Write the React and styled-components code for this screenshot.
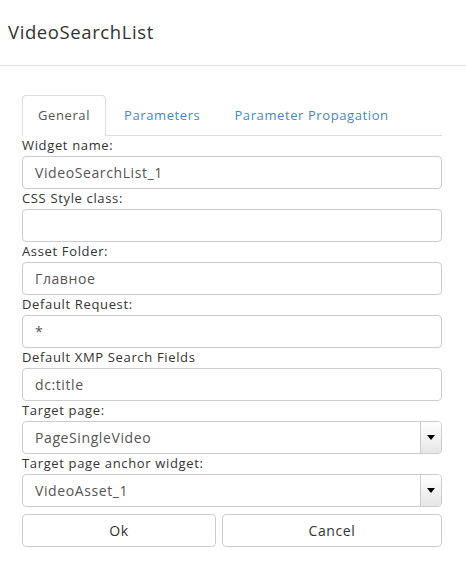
import React from 'react'
import styled, { createGlobalStyle } from 'styled-components'

const GlobalStyle = createGlobalStyle`
  body {
    margin: 0;
    background: #fff;
    font-family: "Open Sans", "Liberation Sans", sans-serif;
    letter-spacing: 0.6px;
  }
  * { box-sizing: border-box; }
`

const Dialog = styled.div`
  width: 466px;
  min-height: 570px;
  background: #fff;
`

const Header = styled.div`
  height: 66px;
  border-bottom: 1px solid #e5e5e5;
  display: flex;
  align-items: center;
  padding: 0 8px 3px;
`

const Title = styled.h4`
  margin: 0;
  font-size: 18.5px;
  font-weight: normal;
  letter-spacing: 0.6px;
  color: #333;
`

const Body = styled.div`
  padding: 29px 24px 0 22px;
`

const Tabs = styled.ul`
  display: flex;
  list-style: none;
  margin: 0;
  padding: 0;
  border-bottom: 1px solid #ddd;
`

const Tab = styled.li`
  margin: 0 2px ${p => (p.$active ? '-1px' : '0')} 0;
  padding: 10px 15px;
  height: ${p => (p.$active ? '41px' : '40px')};
  font-size: 13px;
  line-height: 19px;
  border: 1px solid ${p => (p.$active ? '#ddd' : 'transparent')};
  border-bottom: ${p => (p.$active ? '1px solid #fff' : '0')};
  border-radius: 4px 4px 0 0;
  background: ${p => (p.$active ? '#fff' : 'transparent')};
  color: ${p => (p.$active ? '#555' : '#428bca')};
`

const Label = styled.div`
  height: 20px;
  font-size: 13px;
  line-height: 19px;
  letter-spacing: 0.65px;
  color: #333;
`

const Field = styled.div`
  height: 33px;
  border: 1px solid #ccc;
  border-radius: 4px;
  display: flex;
  align-items: center;
  font-size: 14px;
  color: #555;
  overflow: hidden;
`

const FieldText = styled.span`
  flex: 1;
  padding: 0 12px;
`

const Caret = styled.div`
  width: 21px;
  height: 100%;
  border-left: 1px solid #ccc;
  background: linear-gradient(#fff, #e6e6e6);
  display: flex;
  align-items: center;
  justify-content: center;
  &::after {
    content: '';
    border-top: 5px solid #000;
    border-left: 4px solid transparent;
    border-right: 4px solid transparent;
  }
`

const Buttons = styled.div`
  display: grid;
  grid-template-columns: 194px 1fr;
  gap: 6px;
  margin-top: 7px;
`

const Button = styled.button`
  height: 33px;
  border: 1px solid #ccc;
  border-radius: 4px;
  background: #fff;
  font-family: inherit;
  font-size: 14px;
  letter-spacing: 0.6px;
  color: #333;
`

const fields = [
  { label: 'Widget name:', value: 'VideoSearchList_1' },
  { label: 'CSS Style class:', value: '' },
  { label: 'Asset Folder:', value: 'Главное' },
  { label: 'Default Request:', value: '*' },
  { label: 'Default XMP Search Fields', value: 'dc:title' },
  { label: 'Target page:', value: 'PageSingleVideo', select: true },
  { label: 'Target page anchor widget:', value: 'VideoAsset_1', select: true },
]

const App = () => (
  <Dialog>
    <GlobalStyle />
    <Header>
      <Title>VideoSearchList</Title>
    </Header>
    <Body>
      <Tabs>
        <Tab $active>General</Tab>
        <Tab>Parameters</Tab>
        <Tab>Parameter Propagation</Tab>
      </Tabs>
      {fields.map(f => (
        <div key={f.label}>
          <Label>{f.label}</Label>
          <Field>
            <FieldText>{f.value}</FieldText>
            {f.select && <Caret />}
          </Field>
        </div>
      ))}
      <Buttons>
        <Button>Ok</Button>
        <Button>Cancel</Button>
      </Buttons>
    </Body>
  </Dialog>
)

export default App
